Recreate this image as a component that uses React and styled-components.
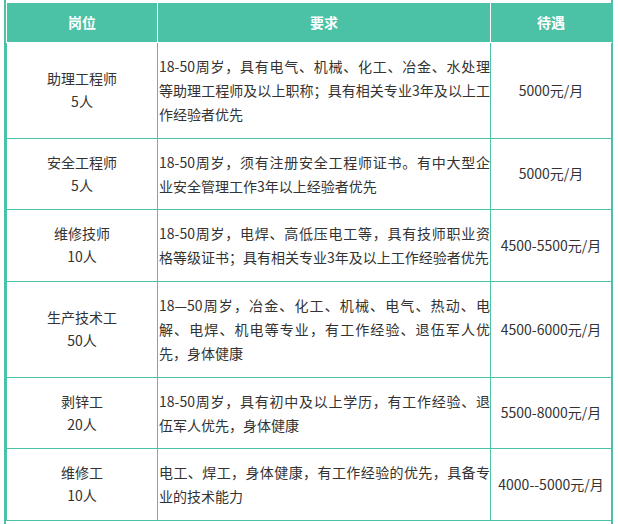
import React from "react";
import styled, { createGlobalStyle } from "styled-components";

const teal = "#4bc1a5";

const GlobalStyle = createGlobalStyle`
  html, body {
    margin: 0;
    padding: 0;
    background: #fff;
  }
  body {
    font-family: "Noto Sans CJK SC", "Noto Sans", sans-serif;
    font-size: 14px;
    color: #333;
  }
`;

const Frame = styled.div`
  box-sizing: border-box;
  margin-left: 4px;
  width: 609px;
  min-height: 100vh;
  padding-top: 2px;
  border-left: 2px solid ${teal};
  border-right: 2px solid ${teal};
`;

const Table = styled.table`
  width: 605px;
  table-layout: fixed;
  border-collapse: collapse;
`;

const Head = styled.th`
  background: ${teal};
  color: #fff;
  font-weight: bold;
  line-height: 24px;
  padding: 7px 0 8px;
  text-align: center;
  border: 1px solid #fff;

  &:last-child {
    border-right-color: ${teal};
  }
`;

const Cell = styled.td`
  border: 1px solid ${teal};
  padding: 11px 0 11.7px;
  vertical-align: middle;
  text-align: center;
  line-height: 23px;
`;

const TextCell = styled(Cell)`
  padding: 11px 0 11.7px 1px;
  line-height: 24px;
  text-align: left;
`;

const Line = styled.span`
  display: block;
  white-space: nowrap;
  text-align: justify;
  text-align-last: ${(p) => (p.$last ? "left" : "justify")};
`;

const jobs = [
  {
    name: "助理工程师",
    count: "5人",
    lines: [
      "18-50周岁，具有电气、机械、化工、冶金、水处理",
      "等助理工程师及以上职称；具有相关专业3年及以上工",
      "作经验者优先",
    ],
    pay: "5000元/月",
  },
  {
    name: "安全工程师",
    count: "5人",
    lines: [
      "18-50周岁，须有注册安全工程师证书。有中大型企",
      "业安全管理工作3年以上经验者优先",
    ],
    pay: "5000元/月",
  },
  {
    name: "维修技师",
    count: "10人",
    lines: [
      "18-50周岁，电焊、高低压电工等，具有技师职业资",
      "格等级证书；具有相关专业3年及以上工作经验者优先",
    ],
    pay: "4500-5500元/月",
  },
  {
    name: "生产技术工",
    count: "50人",
    lines: [
      "18—50周岁，冶金、化工、机械、电气、热动、电",
      "解、电焊、机电等专业，有工作经验、退伍军人优",
      "先，身体健康",
    ],
    pay: "4500-6000元/月",
  },
  {
    name: "剥锌工",
    count: "20人",
    lines: [
      "18-50周岁，具有初中及以上学历，有工作经验、退",
      "伍军人优先，身体健康",
    ],
    pay: "5500-8000元/月",
  },
  {
    name: "维修工",
    count: "10人",
    lines: [
      "电工、焊工，身体健康，有工作经验的优先，具备专",
      "业的技术能力",
    ],
    pay: "4000--5000元/月",
  },
];

export default function App() {
  return (
    <>
      <GlobalStyle />
      <Frame>
        <Table>
          <colgroup>
            <col style={{ width: 151 }} />
            <col style={{ width: 333 }} />
            <col style={{ width: 121 }} />
          </colgroup>
          <thead>
            <tr>
              <Head>岗位</Head>
              <Head>要求</Head>
              <Head>待遇</Head>
            </tr>
          </thead>
          <tbody>
            {jobs.map((job) => (
              <tr key={job.name + job.count}>
                <Cell>
                  {job.name}
                  <br />
                  {job.count}
                </Cell>
                <TextCell>
                  {job.lines.map((line, i) => (
                    <Line key={i} $last={i === job.lines.length - 1}>
                      {line}
                    </Line>
                  ))}
                </TextCell>
                <Cell>{job.pay}</Cell>
              </tr>
            ))}
          </tbody>
        </Table>
      </Frame>
    </>
  );
}
